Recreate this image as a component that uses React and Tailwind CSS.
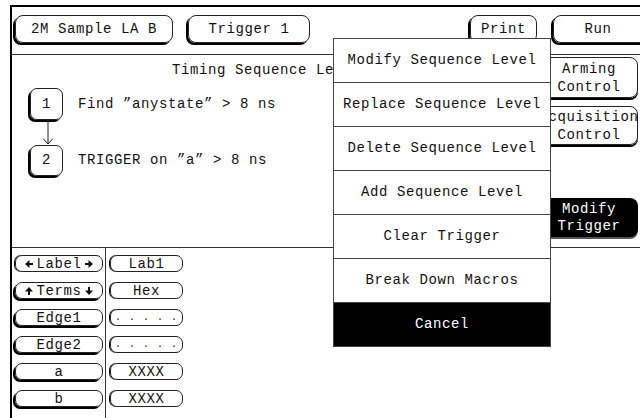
import React from 'react';

const font = "font-['Liberation_Mono',monospace] text-[14px] tracking-[0.6px] text-[#111]";

// small arrow glyphs for the label / terms selectors
const Arrow = ({ dir }) => {
  const paths = {
    left: 'M0 4 L4.5 0 L4.5 8 Z M4.5 3 H8 V5 H4.5 Z',
    right: 'M8 4 L3.5 0 L3.5 8 Z M0 3 H3.5 V5 H0 Z',
    up: 'M4 0 L0 4.5 H8 Z M3 4.5 H5 V8 H3 Z',
    down: 'M4 8 L0 3.5 H8 Z M3 0 H5 V3.5 H3 Z',
  };
  return (
    <svg width="8" height="8" viewBox="0 0 8 8" className="shrink-0">
      <path d={paths[dir]} fill="#111" />
    </svg>
  );
};

const TopButton = ({ children, className = '' }) => (
  <div
    className={`h-[28px] shrink-0 flex items-center justify-center rounded-[8px] border border-[#222] shadow-[-2px_2px_0_0_#000] ${className}`}
  >
    {children}
  </div>
);

const SmallButton = ({ children, shadow }) => (
  <div
    className={`h-[17px] flex items-center justify-center gap-[3px] rounded-[7px] border border-[#222] leading-none ${
      shadow ? 'shadow-[-2px_2px_0_0_#000]' : 'shadow-[-1px_0_0_0_#000]'
    }`}
  >
    {children}
  </div>
);

const menuItems = [
  'Modify Sequence Level',
  'Replace Sequence Level',
  'Delete Sequence Level',
  'Add Sequence Level',
  'Clear Trigger',
  'Break Down Macros',
];

const leftCol = [
  { label: (<><Arrow dir="left" />Label<Arrow dir="right" /></>), shadow: false },
  { label: (<><Arrow dir="up" />Terms<Arrow dir="down" /></>), shadow: true },
  { label: 'Edge1', shadow: true },
  { label: 'Edge2', shadow: true },
  { label: 'a', shadow: true },
  { label: 'b', shadow: true },
];

const rightCol = ['Lab1', 'Hex', '. . . . .', '. . . . .', 'XXXX', 'XXXX'];

export default function App() {
  return (
    <div className={`relative w-[640px] h-[418px] bg-white overflow-hidden ${font}`}>
      {/* screen frame */}
      <div className="mt-[5px] ml-[10px] h-[413px] border-t-2 border-l-2 border-black flex flex-col">
        {/* header row */}
        <div className="h-[48px] shrink-0 border-b border-[#333] flex items-start pt-[8px]">
          <TopButton className="ml-[3px] w-[158px]">2M Sample LA B</TopButton>
          <TopButton className="ml-[15px] w-[122px]">Trigger 1</TopButton>
          <TopButton className="ml-[160px] w-[67px] shadow-[-2px_0_0_0_#000]">Print</TopButton>
          <TopButton className="ml-[16px] w-[100px] pr-[10px]">Run</TopButton>
        </div>

        {/* sequence area */}
        <div className="h-[193px] shrink-0 border-b border-[#333] flex">
          <div className="flex-1 flex flex-col">
            <div className="pt-[6px] pl-[160px] leading-[18px] whitespace-nowrap">Timing Sequence Levels</div>
            <div className="mt-[9px] flex items-center">
              <div className="ml-[18px] w-[33px] h-[32px] rounded-[7px] border border-[#222] shadow-[-2px_2px_0_0_#000] flex items-center justify-center">
                1
              </div>
              <span className="ml-[15px] whitespace-nowrap">Find ”anystate” &gt; 8 ns</span>
            </div>
            <svg width="10" height="25" viewBox="0 0 10 25" className="ml-[31px]">
              <path d="M5 0 V24 M0.5 19 L5 24 L9.5 19" stroke="#222" strokeWidth="1" fill="none" />
            </svg>
            <div className="flex items-center">
              <div className="ml-[18px] w-[33px] h-[31px] rounded-[7px] border border-[#222] shadow-[-2px_2px_0_0_#000] flex items-center justify-center">
                2
              </div>
              <span className="ml-[15px] whitespace-nowrap">TRIGGER on ”a” &gt; 8 ns</span>
            </div>
          </div>

          <div className="w-[98px] mr-[2px] shrink-0 flex flex-col pt-[2px]">
            <div className="h-[41px] rounded-r-[8px] border border-[#222] shadow-[0_2px_0_0_#000] flex flex-col items-center justify-center leading-[18px]">
              <span>Arming</span>
              <span>Control</span>
            </div>
            <div className="mt-[8px] h-[39px] rounded-r-[8px] border border-[#222] shadow-[0_2px_0_0_#000] flex flex-col items-center justify-center leading-[18px] whitespace-nowrap">
              <span>Acquisition</span>
              <span>Control</span>
            </div>
            <div className="mt-[53px] h-[39px] rounded-r-[8px] bg-black text-white shadow-[0_2px_0_0_#555] flex flex-col items-center justify-center leading-[17px]">
              <span>Modify</span>
              <span>Trigger</span>
            </div>
          </div>
        </div>

        {/* label / terms area */}
        <div className="flex-1 flex">
          <div className="w-[94px] border-r border-[#333] flex flex-col gap-[10px] pt-[7px] pl-[3px] pr-[2px]">
            {leftCol.map((b, i) => (
              <SmallButton key={i} shadow={b.shadow}>{b.label}</SmallButton>
            ))}
          </div>
          <div className="w-[77px] flex flex-col gap-[10px] pt-[7px] pl-[4px]">
            {rightCol.map((t, i) => (
              <SmallButton key={i}>
                <span className={t.startsWith('.') ? 'text-[10px] tracking-[1px]' : ''}>{t}</span>
              </SmallButton>
            ))}
          </div>
        </div>
      </div>

      {/* pop-up menu */}
      <div className="absolute left-[333px] top-[38px] w-[218px] border border-[#444] bg-white flex flex-col">
        {menuItems.map((m) => (
          <div key={m} className="h-[44px] border-b border-[#444] flex items-center justify-center whitespace-nowrap">
            {m}
          </div>
        ))}
        <div className="h-[43px] bg-black text-white flex items-center justify-center">Cancel</div>
      </div>
    </div>
  );
}
